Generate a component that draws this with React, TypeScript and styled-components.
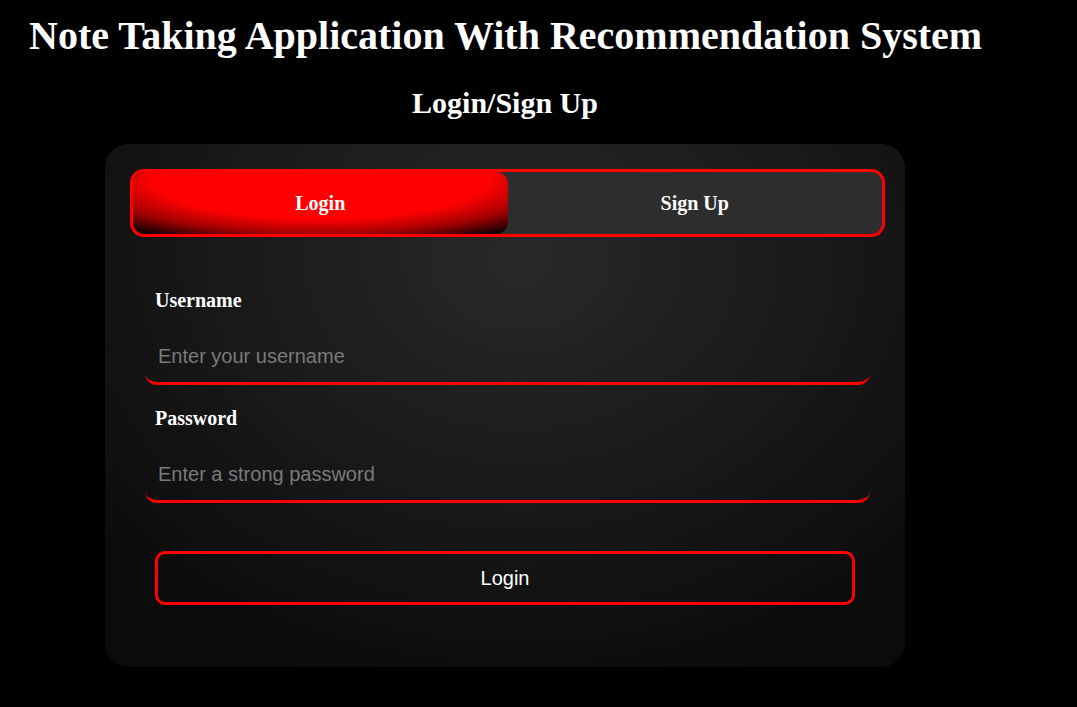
import React, { useState } from "react";
import styled, { createGlobalStyle } from "styled-components";

const Global = createGlobalStyle`
  html, body { margin: 0; padding: 0; background: #000; }
  body { font-family: "Liberation Serif", "Times New Roman", serif; color: #fff; }
  * { box-sizing: border-box; }
`;

const Page = styled.div`
  width: 1077px;
  min-height: 707px;
  background: #000;
  padding: 11px 0 40px 0;
`;

const Title = styled.h1`
  margin: 0 0 0 29px;
  font-size: 40px;
  font-weight: bold;
  line-height: 50px;
  color: #fff;
`;

const Column = styled.div`
  width: 800px;
  margin-left: 105px;
  display: flex;
  flex-direction: column;
  align-items: stretch;
`;

const Subtitle = styled.h2`
  margin: 24px 0 23px 0;
  text-align: center;
  font-size: 30px;
  line-height: 36px;
  font-weight: bold;
`;

const Card = styled.div`
  border-radius: 24px;
  background: radial-gradient(ellipse 70% 85% at 52% 22%, #292929 0%, #1a1a1a 50%, #0b0b0b 100%);
  padding: 25px 20px 62px 25px;
  display: flex;
  flex-direction: column;
`;

const Tabs = styled.div`
  display: flex;
  border: 3px solid #ff0000;
  border-radius: 14px;
  background: #2d2d2d;
  height: 68px;
`;

const Tab = styled.button<{ $active: boolean }>`
  flex: 1;
  border: none;
  border-radius: 12px;
  font-family: "Liberation Serif", "Times New Roman", serif;
  font-weight: bold;
  font-size: 20px;
  color: #fff;
  cursor: pointer;
  background: ${(p) =>
    p.$active
      ? "radial-gradient(ellipse 75% 110% at 50% 10%, #ff0000 0%, #ff0000 60%, #a00000 82%, #1a0000 100%)"
      : "transparent"};
`;

const Form = styled.form`
  display: flex;
  flex-direction: column;
  padding: 51px 15px 0 15px;
`;

const Label = styled.label`
  font-weight: bold;
  font-size: 20px;
  line-height: 24px;
  padding-left: 10px;
  margin-bottom: 19px;
`;

const Input = styled.input`
  height: 54px;
  border: none;
  border-bottom: 3px solid #ff0000;
  border-radius: 0 0 12px 12px;
  background: transparent;
  padding: 0 13px;
  font-family: "Liberation Sans", Arial, sans-serif;
  font-size: 20px;
  color: #fff;
  outline: none;
  margin-bottom: 21px;
  &::placeholder { color: #7a7a7a; }
`;

const Submit = styled.button`
  margin: 27px 15px 0 10px;
  height: 54px;
  border: 3px solid #ff0000;
  border-radius: 10px;
  background: transparent;
  color: #fff;
  font-family: "Liberation Sans", Arial, sans-serif;
  font-size: 20px;
  cursor: pointer;
`;

export default function App() {
  const [tab, setTab] = useState<"login" | "signup">("login");
  return (
    <Page>
      <Global />
      <Title>Note Taking Application With Recommendation System</Title>
      <Column>
        <Subtitle>Login/Sign Up</Subtitle>
        <Card>
          <Tabs>
            <Tab $active={tab === "login"} onClick={() => setTab("login")}>Login</Tab>
            <Tab $active={tab === "signup"} onClick={() => setTab("signup")}>Sign Up</Tab>
          </Tabs>
          <Form onSubmit={(e) => e.preventDefault()}>
            <Label>Username</Label>
            <Input placeholder="Enter your username" />
            <Label>Password</Label>
            <Input type="password" placeholder="Enter a strong password" />
            <Submit type="submit">Login</Submit>
          </Form>
        </Card>
      </Column>
    </Page>
  );
}
